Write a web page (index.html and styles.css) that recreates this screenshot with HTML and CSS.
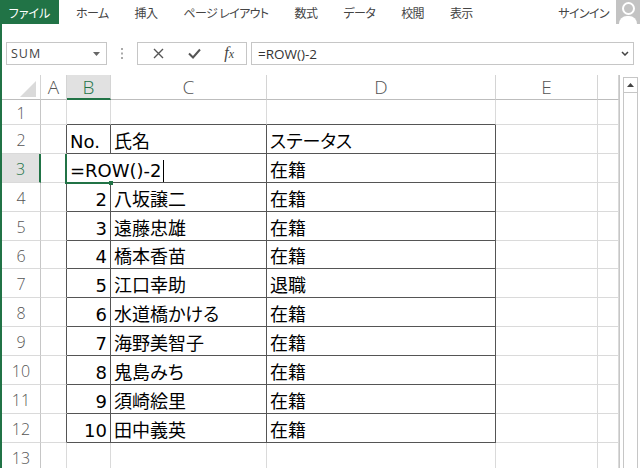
FILE: index.html
```html
<!DOCTYPE html>
<html lang="ja">
<head>
    <meta charset="UTF-8">
    <title>Excel - ROW関数</title>
    <link rel="stylesheet" href="styles.css">
</head>
<body>
    <div class="tabbar">
        <div class="file-tab">ファイル</div>
        <span class="tab">ホーム</span>
        <span class="tab">挿入</span>
        <span class="tab">ページ レイアウト</span>
        <span class="tab">数式</span>
        <span class="tab">データ</span>
        <span class="tab">校閲</span>
        <span class="tab">表示</span>
        <div class="account">
            <span class="signin">サインイン</span>
            <div class="avatar">
                <div class="avatar-head"></div>
                <div class="avatar-body"></div>
            </div>
        </div>
    </div>

    <div class="main">
        <div class="fbar">
            <div class="namebox">
                <span>SUM</span>
                <svg width="7" height="4" viewBox="0 0 7 4"><path d="M0 0 H7 L3.5 4 Z" fill="#666"/></svg>
            </div>
            <div class="grip">
                <svg width="2" height="11" viewBox="0 0 2 11">
                    <rect x="0" y="0" width="2" height="2" fill="#aaa"/>
                    <rect x="0" y="4.5" width="2" height="2" fill="#aaa"/>
                    <rect x="0" y="9" width="2" height="2" fill="#aaa"/>
                </svg>
            </div>
            <div class="fbtns">
                <svg width="11" height="11" viewBox="0 0 11 11"><path d="M1 1 L10 10 M10 1 L1 10" stroke="#555" stroke-width="1.4"/></svg>
                <svg width="13" height="11" viewBox="0 0 13 11"><path d="M1 5.5 L5 9.5 L12 1.5" fill="none" stroke="#555" stroke-width="2"/></svg>
                <span class="fx">f<span class="fx-x">x</span></span>
            </div>
            <div class="formula">
                <span>=ROW()-2</span>
                <svg width="8" height="5" viewBox="0 0 8 5"><path d="M1 1 L4 4 L7 1" fill="none" stroke="#444" stroke-width="1.5"/></svg>
            </div>
        </div>

        <div class="sheet-wrap">
            <div class="sheet">
                <!-- column headers -->
                <div class="corner"><span class="tri"></span></div>
                <div class="ch">A</div>
                <div class="ch on">B</div>
                <div class="ch">C</div>
                <div class="ch">D</div>
                <div class="ch">E</div>
                <div class="ch"></div>

                <!-- row 1 -->
                <div class="rh">1</div>
                <div class="c"></div>
                <div class="c tt"></div>
                <div class="c tt"></div>
                <div class="c tt"></div>
                <div class="c"></div>
                <div class="c"></div>

                <!-- row 2 -->
                <div class="rh">2</div>
                <div class="c tl"></div>
                <div class="c t">No.</div>
                <div class="c t">氏名</div>
                <div class="c t">ステータス</div>
                <div class="c"></div>
                <div class="c"></div>

                <!-- row 3 (editing) -->
                <div class="rh on">3</div>
                <div class="c tl"></div>
                <div class="c t edit"><span class="caret">=ROW()-2</span></div>
                <div class="c t"></div>
                <div class="c t">在籍</div>
                <div class="c"></div>
                <div class="c"></div>

                <div class="rh">4</div>
                <div class="c tl"></div>
                <div class="c t n">2</div>
                <div class="c t">八坂譲二</div>
                <div class="c t">在籍</div>
                <div class="c"></div>
                <div class="c"></div>

                <div class="rh">5</div>
                <div class="c tl"></div>
                <div class="c t n">3</div>
                <div class="c t">遠藤忠雄</div>
                <div class="c t">在籍</div>
                <div class="c"></div>
                <div class="c"></div>

                <div class="rh">6</div>
                <div class="c tl"></div>
                <div class="c t n">4</div>
                <div class="c t">橋本香苗</div>
                <div class="c t">在籍</div>
                <div class="c"></div>
                <div class="c"></div>

                <div class="rh">7</div>
                <div class="c tl"></div>
                <div class="c t n">5</div>
                <div class="c t">江口幸助</div>
                <div class="c t">退職</div>
                <div class="c"></div>
                <div class="c"></div>

                <div class="rh">8</div>
                <div class="c tl"></div>
                <div class="c t n">6</div>
                <div class="c t">水道橋かける</div>
                <div class="c t">在籍</div>
                <div class="c"></div>
                <div class="c"></div>

                <div class="rh">9</div>
                <div class="c tl"></div>
                <div class="c t n">7</div>
                <div class="c t">海野美智子</div>
                <div class="c t">在籍</div>
                <div class="c"></div>
                <div class="c"></div>

                <div class="rh">10</div>
                <div class="c tl"></div>
                <div class="c t n">8</div>
                <div class="c t">鬼島みち</div>
                <div class="c t">在籍</div>
                <div class="c"></div>
                <div class="c"></div>

                <div class="rh">11</div>
                <div class="c tl"></div>
                <div class="c t n">9</div>
                <div class="c t">須崎絵里</div>
                <div class="c t">在籍</div>
                <div class="c"></div>
                <div class="c"></div>

                <div class="rh">12</div>
                <div class="c tl"></div>
                <div class="c t n">10</div>
                <div class="c t">田中義英</div>
                <div class="c t">在籍</div>
                <div class="c"></div>
                <div class="c"></div>

                <div class="rh">13</div>
                <div class="c"></div>
                <div class="c"></div>
                <div class="c"></div>
                <div class="c"></div>
                <div class="c"></div>
                <div class="c"></div>
            </div>

            <div class="vscroll">
                <div class="up">
                    <svg width="7" height="4" viewBox="0 0 7 4"><path d="M0 4 H7 L3.5 0 Z" fill="#444"/></svg>
                </div>
            </div>
        </div>
    </div>
</body>
</html>
```

FILE: styles.css
```css
html, body {
    margin: 0;
    padding: 0;
    background: #fff;
}
body {
    width: 640px;
    height: 468px;
    overflow: hidden;
    font-family: "Noto Sans CJK JP", sans-serif;
    color: #444;
}

/* ribbon tabs */
.tabbar {
    display: flex;
    align-items: center;
    width: 640px;
    height: 24px;
    font-size: 12px;
    font-feature-settings: "palt";
}
.file-tab {
    width: 59px;
    height: 24px;
    flex-shrink: 0;
    background: #217346; /* excel green */
    color: #fff;
    display: flex;
    align-items: center;
    justify-content: center;
    margin-right: 17px;
}
.tab {
    margin-right: 26px;
    letter-spacing: -0.6px;
}
.account {
    margin-left: auto;
    height: 24px;
    display: flex;
    align-items: center;
    gap: 7px;
}
.signin {
    letter-spacing: -0.6px;
}
.avatar {
    width: 24px;
    height: 24px;
    flex: none;
    background-color: #c3c3c3;
    display: flex;
    flex-direction: column;
    align-items: center;
    justify-content: flex-end;
    overflow: hidden;
}
.avatar-head {
    width: 9px;
    height: 9px;
    border: 2px solid #fff;
    border-radius: 50%;
    margin-bottom: 1px;
}
.avatar-body {
    width: 18px;
    height: 8px;
    background: #fff;
    border-radius: 9px 9px 0 0;
}

.main {
    border-left: 2px solid #217346;
    height: 444px;
    padding-top: 18px;
    box-sizing: border-box;
    overflow: hidden;
}

/* formula bar */
.fbar {
    display: flex;
    height: 23px;
    padding-right: 6px;
}
.namebox {
    margin-left: 4px;
    width: 101px;
    box-sizing: border-box;
    border: 1px solid #c6c6c6;
    display: flex;
    align-items: center;
    justify-content: space-between;
    padding: 0 6px 0 4px;
    font-family: "Open Sans", sans-serif;
    font-size: 12.5px;
    letter-spacing: 1px;
    color: #444;
}
.grip {
    width: 30px;
    display: flex;
    align-items: center;
    justify-content: center;
}
.fbtns {
    width: 110px;
    box-sizing: border-box;
    border: 1px solid #c6c6c6;
    display: flex;
    align-items: center;
    justify-content: space-between;
    padding: 0 12px 0 15px;
}
.fx {
    font-family: "Liberation Serif", serif;
    font-style: italic;
    font-size: 16px;
    line-height: 16px;
    color: #444;
}
.fx-x {
    font-size: 12px;
}
.formula {
    flex: 1;
    margin-left: 4px;
    box-sizing: border-box;
    border: 1px solid #c6c6c6;
    display: flex;
    align-items: center;
    justify-content: space-between;
    padding: 0 4px 0 6px;
    font-family: "Open Sans", sans-serif;
    font-size: 13.5px;
    color: #333;
}

/* grid */
.sheet-wrap {
    display: flex;
    margin-top: 10px;
}
.sheet {
    display: grid;
    grid-template-columns: 39px 26px 44px 156px 229px 102px 21px;
    grid-template-rows: 25px 25px repeat(12, 28.9px);
    border-right: 1px solid #c6c6c6;
}
.sheet > div {
    box-sizing: border-box;
    display: flex;
    white-space: nowrap;
    overflow: hidden;
}
.corner {
    border-right: 1px solid #d4d4d4;
    border-bottom: 1px solid #bdbdbd;
    align-items: flex-end;
    justify-content: flex-end;
    padding: 0 4px 2px 0;
}
.tri {
    width: 0;
    height: 0;
    border-left: 16px solid transparent;
    border-bottom: 16px solid #dadada;
}
.ch {
    border-right: 1px solid #d4d4d4;
    border-bottom: 1px solid #bdbdbd;
    align-items: center;
    justify-content: center;
    font-family: "Open Sans", sans-serif;
    font-weight: 300;
    font-size: 19px;
    color: #555;
}
.ch.on {
    background: #e1e1e1;
    color: #217346;
    border-bottom: 2px solid #217346;
}
.rh {
    border-right: 1px solid #c6c6c6;
    border-bottom: 1px solid #dadada;
    align-items: center;
    justify-content: center;
    padding-top: 2px;
    font-family: "Open Sans", sans-serif;
    font-weight: 300;
    font-size: 16px;
    color: #555;
}
.rh.on {
    background: #e1e1e1;
    color: #217346;
    border-right: 2px solid #217346;
}
.c {
    border-right: 1px solid #dadada;
    border-bottom: 1px solid #dadada;
    align-items: flex-end;
    padding: 0 3px;
    font-family: "DejaVu Sans", "Noto Sans CJK JP", sans-serif;
    font-feature-settings: "palt";
    font-size: 18px;
    line-height: 22px;
    color: #000;
}
.c.t {
    border-right-color: #555;
    border-bottom-color: #555;
}
.c.tl {
    border-right-color: #555;
}
.c.tt {
    border-bottom-color: #555;
}
.c.n {
    justify-content: flex-end;
}

/* cell being edited */
.sheet > .edit {
    overflow: visible;
    position: relative;
    border-right-color: #fff;
    z-index: 1;
}
.edit::before {
    content: "";
    position: absolute;
    left: -2px;
    top: 0;
    right: -1px;
    bottom: -2px;
    border-left: 2px solid #217346;
    border-bottom: 2px solid #217346;
}
.edit::after {
    content: "";
    position: absolute;
    right: -3px;
    bottom: -3px;
    width: 4px;
    height: 4px;
    background: #217346;
}
.caret {
    border-right: 1px solid #000;
    padding-right: 1px;
}

/* scrollbar */
.vscroll {
    margin-left: 3px;
    margin-top: 2px;
    width: 15px;
    height: 400px;
    box-sizing: border-box;
    border: 1px solid #c6c6c6;
}
.up {
    height: 14px;
    border-bottom: 1px solid #c6c6c6;
    display: flex;
    align-items: center;
    justify-content: center;
}
```
